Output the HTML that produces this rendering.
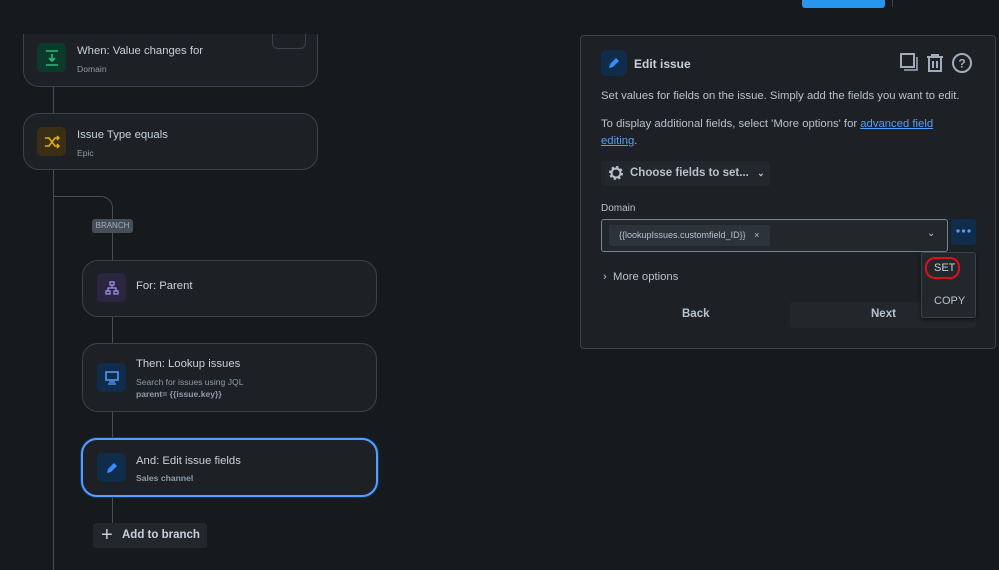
<!DOCTYPE html>
<html><head><meta charset="utf-8"><style>
*{box-sizing:border-box;margin:0;padding:0}
body{width:999px;height:570px;background:#161a1d;font-family:"Liberation Sans",sans-serif;color:#b6c2cf;position:relative;overflow:hidden}
.a{position:absolute}
.card{position:absolute;background:#1d2125;border:1px solid #3c4249;border-radius:16px}
.ic{position:absolute;width:29px;height:29px;border-radius:5px;display:flex;align-items:center;justify-content:center}
.t{position:absolute;font-size:11.3px;color:#c7d1db}
.s{position:absolute;font-size:8.6px;color:#8c9bab}
.line{position:absolute;background:#454f59}
.p{font-size:11.3px}
</style></head><body>
<div class="a" style="left:802px;top:0;width:83px;height:8px;background:#2896ef;border-radius:0 0 3px 3px"></div>
<div class="a" style="left:892px;top:0;width:1px;height:7px;background:#3c4249"></div>

<div class="line" style="left:53px;top:86px;width:1px;height:484px"></div>
<div class="a" style="left:53px;top:196px;width:60px;height:30px;border-top:1px solid #454f59;border-right:1px solid #454f59;border-top-right-radius:12px"></div>
<div class="line" style="left:112px;top:226px;width:1px;height:300px"></div>

<div class="card" style="left:23px;top:20px;width:295px;height:67px;border-top-color:transparent;border-radius:0 0 16px 16px"></div>
<div class="a" style="left:272px;top:20px;width:34px;height:29px;background:#1d2125;border:1px solid #3c4249;border-radius:0 0 6px 6px;border-top:none"></div>
<div class="a" style="left:0;top:0;width:330px;height:34px;background:#161a1d"></div>
<div class="a" style="left:0;top:0;width:800px;height:34px;background:#161a1d;z-index:-1"></div>
<div class="ic" style="left:37px;top:43px;background:#0c3a2a"><svg width="14" height="16"><path d="M1 1h12M7 4v7M4 8l3 3 3-3M1 15h12" stroke="#2abb7f" stroke-width="1.6" fill="none"/></svg></div>
<div class="t" style="left:77px;top:45px">When: Value changes for</div>
<div class="s" style="left:77px;top:64px">Domain</div>

<div class="card" style="left:23px;top:113px;width:295px;height:57px"></div>
<div class="ic" style="left:37px;top:127px;background:#3a2e14"><svg width="16" height="14"><path d="M1 3h4l6 8h4M1 11h4l6-8h4M13 1l2 2-2 2M13 9l2 2-2 2" stroke="#e2b203" stroke-width="1.5" fill="none"/></svg></div>
<div class="t" style="left:77px;top:129px">Issue Type equals</div>
<div class="s" style="left:77px;top:148px">Epic</div>

<div class="a" style="left:92px;top:219px;width:41px;height:14px;background:#454f59;border-radius:3px;font-size:8px;color:#9fadbc;text-align:center;line-height:14px">BRANCH</div>

<div class="card" style="left:82px;top:260px;width:295px;height:57px"></div>
<div class="ic" style="left:97px;top:273px;background:#2b2540"><svg width="14" height="14"><rect x="5" y="1" width="4" height="3" fill="none" stroke="#9f8fef" stroke-width="1.3"/><rect x="1" y="10" width="4" height="3" fill="none" stroke="#9f8fef" stroke-width="1.3"/><rect x="9" y="10" width="4" height="3" fill="none" stroke="#9f8fef" stroke-width="1.3"/><path d="M7 4v3M3 10V7h8v3" stroke="#9f8fef" stroke-width="1.3" fill="none"/></svg></div>
<div class="t" style="left:136px;top:280px">For: Parent</div>

<div class="card" style="left:82px;top:343px;width:295px;height:69px"></div>
<div class="ic" style="left:97px;top:363px;background:#0f2d4a"><svg width="14" height="14"><rect x="1" y="1" width="12" height="8" fill="none" stroke="#579dff" stroke-width="1.5"/><path d="M4 11h6M3 13h8" stroke="#579dff" stroke-width="1.3"/></svg></div>
<div class="t" style="left:136px;top:358px">Then: Lookup issues</div>
<div class="s" style="left:136px;top:377px">Search for issues using JQL</div>
<div class="s" style="left:136px;top:389px;font-weight:bold">parent= {{issue.key}}</div>

<div class="card" style="left:81px;top:438px;width:297px;height:59px;border:2px solid #579dff;box-shadow:0 0 0 1px #0c3a6a"></div>
<div class="ic" style="left:97px;top:453px;background:#0f2d4a"><svg width="14" height="14"><path d="M2 12l1-4 6-6 3 3-6 6z" fill="#388bff"/></svg></div>
<div class="t" style="left:136px;top:455px">And: Edit issue fields</div>
<div class="s" style="left:136px;top:473px;font-weight:bold">Sales channel</div>

<div class="a" style="left:93px;top:523px;width:114px;height:25px;background:#22272b;border-radius:3px;font-size:11.5px;font-weight:bold;color:#c7d1db;line-height:25px;padding-left:29px">Add to branch</div>
<div class="a" style="left:101px;top:527px;font-size:20px;line-height:16px;color:#c7d1db">+</div>

<div class="a" style="left:580px;top:35px;width:416px;height:314px;background:#1d2125;border:1px solid #3c4249;border-radius:4px"></div>
<div class="ic" style="left:601px;top:50px;width:26px;height:26px;background:#0f2d4a"><svg width="14" height="14"><path d="M2 12l1-4 6-6 3 3-6 6z" fill="#388bff"/></svg></div>
<div class="a" style="left:634px;top:57px;font-size:12px;font-weight:bold;color:#c7d1db">Edit issue</div>
<svg class="a" style="left:899px;top:52px" width="76" height="24"><rect x="2" y="2" width="13" height="13" fill="none" stroke="#9fadbc" stroke-width="2"/><path d="M5 18h13V5" stroke="#9fadbc" stroke-width="1.5" fill="none"/><path d="M28 5h16M33 5V3h6v2M30 6v13h12V6M34 9v7M38 9v7" stroke="#9fadbc" stroke-width="2" fill="none"/><circle cx="63" cy="11" r="9" fill="none" stroke="#9fadbc" stroke-width="2"/><text x="63" y="15.5" font-size="12" font-weight="bold" fill="#9fadbc" text-anchor="middle" font-family="Liberation Sans">?</text></svg>
<div class="a p" style="left:601px;top:90px;color:#b6c2cf;white-space:nowrap">Set values for fields on the issue. Simply add the fields you want to edit.</div>
<div class="a p" style="left:601px;top:116px;width:350px;line-height:17px;color:#b6c2cf">To display additional fields, select 'More options' for <span style="color:#579dff;text-decoration:underline">advanced field editing</span>.</div>
<div class="a" style="left:601px;top:161px;width:169px;height:25px;background:#22272b;border-radius:3px;font-size:11.5px;font-weight:bold;color:#b6c2cf;line-height:25px;padding-left:29px">Choose fields to set... <span style="font-size:9px;margin-left:5px">⌄</span></div>
<svg class="a" style="left:608px;top:165px" width="16" height="16"><circle cx="8" cy="8" r="4.5" fill="none" stroke="#b6c2cf" stroke-width="2"/><circle cx="8" cy="8" r="6" fill="none" stroke="#b6c2cf" stroke-width="2" stroke-dasharray="2.4 2.3"/></svg>
<div class="a" style="left:601px;top:203px;font-size:10px;color:#b6c2cf">Domain</div>
<div class="a" style="left:601px;top:219px;width:347px;height:33px;background:#22272b;border:1px solid #738496;border-radius:3px"></div>
<div class="a" style="left:609px;top:225px;width:161px;height:21px;background:#2c333a;border-radius:2px;font-size:9px;color:#b6c2cf;line-height:21px;padding-left:10px">{{lookupIssues.customfield_ID}} <span style="margin-left:6px">×</span></div>
<div class="a" style="left:927px;top:228px;font-size:10px;color:#b6c2cf">⌄</div>
<div class="a" style="left:951px;top:219px;width:25px;height:26px;background:#0f2d4a;border-radius:3px"></div>
<svg class="a" style="left:951px;top:219px" width="25" height="26"><circle cx="7" cy="12" r="1.6" fill="#579dff"/><circle cx="12.5" cy="12" r="1.6" fill="#579dff"/><circle cx="18" cy="12" r="1.6" fill="#579dff"/></svg>
<div class="a p" style="left:603px;top:271px;color:#b6c2cf">›&nbsp;&nbsp;More options</div>
<div class="a" style="left:790px;top:302px;width:186px;height:26px;background:#22272b;border-radius:3px"></div>
<div class="a" style="left:682px;top:308px;font-size:11.5px;font-weight:bold;color:#b6c2cf">Back</div>
<div class="a" style="left:871px;top:308px;font-size:11.5px;font-weight:bold;color:#b6c2cf">Next</div>
<div class="a" style="left:921px;top:252px;width:55px;height:66px;background:#22272b;border:1px solid #3c4249;border-radius:3px;box-shadow:0 2px 4px #0008"></div>
<div class="a" style="left:934px;top:262px;font-size:11px;color:#c7d1db">SET</div>
<div class="a" style="left:925px;top:257px;width:35px;height:22px;border:2px solid #e0101a;border-radius:10px"></div>
<div class="a" style="left:934px;top:295px;font-size:11px;color:#b6c2cf">COPY</div>
</body></html>
